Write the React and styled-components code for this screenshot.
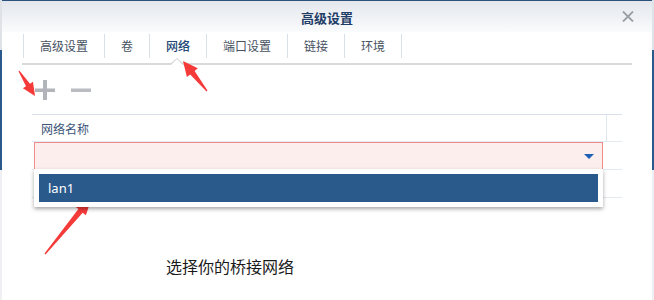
import React from 'react';
import styled, { createGlobalStyle } from 'styled-components';

const GlobalStyle = createGlobalStyle`
    html, body {
        margin: 0;
        padding: 0;
    }
    body {
        width: 654px;
        height: 300px;
        overflow: hidden;
        font-family: "Noto Sans", "Noto Sans CJK SC", sans-serif;
        background: linear-gradient(to bottom, #dfe3e8 0, #dfe3e8 50px, #2a5a8c 50px, #2a5a8c 170px, #eef0f3 170px);
    }
`;

const Page = styled.div`
    position: relative;
    width: 654px;
    height: 300px;
`;

const Dialog = styled.div`
    margin: 0 2px;
    width: 650px;
    height: 300px;
    background: #fff;
    border-top: 1px solid #2b527f;
    box-sizing: border-box;
    display: flex;
    flex-direction: column;
`;

const Header = styled.div`
    display: grid;
    grid-template-columns: 1fr auto 1fr;
    align-items: center;
    height: 31px;
    background: linear-gradient(to bottom, #e3e7ed, #fafbfc);
`;

const Title = styled.div`
    grid-column: 2;
    font-family: "Noto Sans CJK SC", sans-serif;
    font-size: 13px;
    font-weight: 700;
    color: #1f3d66;
    padding-top: 2px;
`;

const CloseButton = styled.div`
    justify-self: end;
    margin-right: 18px;
    width: 12px;
    height: 11px;
    display: flex;
`;

const TabBar = styled.div`
    display: flex;
    margin: 2px 20px 0;
    padding: 0 0 5px 1px;
    border-bottom: 2px solid #dadada;
`;

const Tab = styled.div`
    position: relative;
    height: 24px;
    line-height: 24px;
    padding: 0 16px;
    border-right: 1px solid #d9e0e8;
    ${ props => props.first && 'border-left: 1px solid #d9e0e8;' }
    font-family: "Noto Sans CJK SC", sans-serif;
    font-size: 12px;
    font-weight: ${ props => props.active ? 500 : 400 };
    color: ${ props => props.active ? '#234774' : '#46525f' };

    ${ props => props.active && `
        &::before, &::after {
            content: '';
            position: absolute;
            left: 50%;
            width: 0;
            height: 0;
            border-style: solid;
            border-color: transparent;
        }
        &::before {
            bottom: -6px;
            margin-left: -8px;
            border-width: 0 7px 6px 7px;
            border-bottom-color: #d4d4d4;
        }
        &::after {
            bottom: -7px;
            margin-left: -7px;
            border-width: 0 6px 6px 6px;
            border-bottom-color: #fff;
        }
    ` }
`;

const Toolbar = styled.div`
    display: flex;
    gap: 16px;
    margin-top: 15px;
    padding-left: 33px;
    height: 20px;
`;

const ToolIcon = styled.svg`
    width: 20px;
    height: 20px;
    display: block;
`;

const Table = styled.div`
    margin: 14px 0 0 30px;
    width: 590px;
`;

const HeaderRow = styled.div`
    display: grid;
    grid-template-columns: 574px 16px;
    height: 26px;
    border-top: 1px solid #d8e1eb;
    border-bottom: 1px solid #e3e9f0;
`;

const HeaderCell = styled.div`
    display: flex;
    align-items: center;
    padding-left: 9px;
    font-family: "Noto Sans CJK SC", sans-serif;
    font-size: 12px;
    color: #3b5578;
    ${ props => props.divider && 'border-left: 1px solid #e1e7ee; padding-left: 0;' }
`;

const Row = styled.div`
    position: relative;
    height: 27px;
    border-bottom: 1px solid #e3e9f0;
`;

const SelectBox = styled.div`
    position: relative;
    z-index: 1;
    margin-left: 2px;
    width: 569px;
    height: 28px;
    box-sizing: border-box;
    border: 1px solid #f28d8d;
    background: #fdeeee;
    display: flex;
    align-items: center;
    justify-content: flex-end;
    padding-right: 8px;
`;

const Caret = styled.div`
    width: 0;
    height: 0;
    border-left: 5px solid transparent;
    border-right: 5px solid transparent;
    border-top: 5px solid #1f5fb4;
`;

const Menu = styled.div`
    position: absolute;
    top: 100%;
    left: -1px;
    width: 569px;
    box-sizing: border-box;
    padding: 5px;
    background: #fff;
    box-shadow: 0 2px 4px rgba(0, 0, 0, 0.35);
`;

const MenuItem = styled.div`
    height: 28px;
    line-height: 28px;
    padding-left: 9px;
    background: ${ props => props.selected ? '#2a5a8c' : '#fff' };
    color: ${ props => props.selected ? '#fff' : '#333' };
    font-family: "Noto Sans", sans-serif;
    font-size: 13px;
    font-weight: 400;
`;

const Hint = styled.div`
    margin: 58px 0 0 164px;
    font-family: "Noto Sans CJK SC", sans-serif;
    font-size: 16px;
    line-height: 20px;
    color: #1a1a1a;
`;

const Annotations = styled.svg`
    position: absolute;
    top: 0;
    left: 0;
    pointer-events: none;
`;

const tabs = ['高级设置', '卷', '网络', '端口设置', '链接', '环境'];

// red callout arrows drawn over the screenshot: tail -> tip
const arrows = [
    { from: [19, 71], to: [35, 96], head: 13, width: 6 },
    { from: [207, 91], to: [183, 61], head: 15, width: 7 },
    { from: [45, 254], to: [92, 197], head: 18, width: 7 },
];

const arrowPoints = ({ from, to, head, width }) => {
    const [tx, ty] = from;
    const [px, py] = to;
    const len = Math.hypot(px - tx, py - ty);
    const dx = (px - tx) / len;
    const dy = (py - ty) / len;
    const nx = -dy;
    const ny = dx;
    const bx = px - dx * head;
    const by = py - dy * head;
    const shaft = width * 0.4;
    const pts = [
        [tx + nx * 0.6, ty + ny * 0.6],
        [bx + nx * shaft, by + ny * shaft],
        [bx + nx * width, by + ny * width],
        [px, py],
        [bx - nx * width, by - ny * width],
        [bx - nx * shaft, by - ny * shaft],
        [tx - nx * 0.6, ty - ny * 0.6],
    ];
    return pts.map(p => p.map(v => v.toFixed(1)).join(',')).join(' ');
};

const App = () => (
    <Page>
        <GlobalStyle />
        <Dialog>
            <Header>
                <Title>高级设置</Title>
                <CloseButton>
                    <svg width="12" height="11" viewBox="0 0 12 11">
                        <path d="M1 0.5 L11 10.5 M11 0.5 L1 10.5" stroke="#9a9ea5" strokeWidth="1.8" fill="none" />
                    </svg>
                </CloseButton>
            </Header>

            <TabBar>
                { tabs.map((t, i) => (
                    <Tab key={ t } first={ i === 0 } active={ t === '网络' }>{ t }</Tab>
                )) }
            </TabBar>

            <Toolbar>
                <ToolIcon viewBox="0 0 20 20">
                    <rect x="8" y="0" width="4" height="20" fill="#b1b4b9" />
                    <rect x="0" y="8.5" width="20" height="3.5" fill="#b1b4b9" />
                </ToolIcon>
                <ToolIcon viewBox="0 0 20 20">
                    <rect x="0" y="8.5" width="20" height="3.5" fill="#b9bcc1" />
                </ToolIcon>
            </Toolbar>

            <Table>
                <HeaderRow>
                    <HeaderCell>网络名称</HeaderCell>
                    <HeaderCell divider />
                </HeaderRow>
                <Row>
                    <SelectBox>
                        <Caret />
                        <Menu>
                            <MenuItem selected>lan1</MenuItem>
                        </Menu>
                    </SelectBox>
                </Row>
                <Row />
            </Table>

            <Hint>选择你的桥接网络</Hint>
        </Dialog>

        <Annotations width="654" height="300" viewBox="0 0 654 300">
            { arrows.map((a, i) => (
                <polygon key={ i } points={ arrowPoints(a) } fill="#f53a3a" />
            )) }
        </Annotations>
    </Page>
);

export default App;
